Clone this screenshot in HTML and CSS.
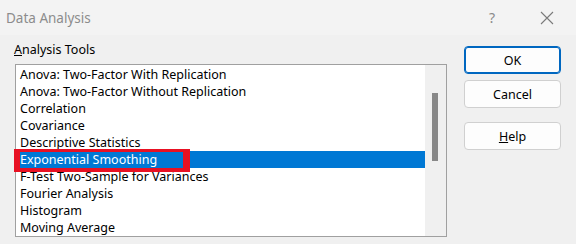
FILE: index.html
```html
<!DOCTYPE html>
<html lang="en">
<head>
  <meta charset="UTF-8">
  <title>Data Analysis</title>
  <link rel="stylesheet" href="styles.css">
</head>
<body>
  <div class="dialog">
    <div class="titlebar">
      <span class="title">Data Analysis</span>
      <span class="help-icon">?</span>
      <svg class="close-icon" width="14" height="14" viewBox="0 0 14 14">
        <path d="M1 1 L13 13 M13 1 L1 13" stroke="#7a7a7a" stroke-width="1.1" fill="none"/>
      </svg>
    </div>

    <div class="content">
      <div class="tools">
        <div class="label"><u>A</u>nalysis Tools</div>
        <div class="listbox">
          <ul class="items">
            <li>Anova: Two-Factor With Replication</li>
            <li>Anova: Two-Factor Without Replication</li>
            <li>Correlation</li>
            <li>Covariance</li>
            <li>Descriptive Statistics</li>
            <li class="selected"><span class="marker">Exponential Smoothing</span></li>
            <li>F-Test Two-Sample for Variances</li>
            <li>Fourier Analysis</li>
            <li>Histogram</li>
            <li>Moving Average</li>
          </ul>
          <div class="scrollbar">
            <div class="thumb"></div>
          </div>
        </div>
      </div>

      <div class="buttons">
        <button class="btn default">OK</button>
        <button class="btn">Cancel</button>
        <button class="btn help"><u>H</u>elp</button>
      </div>
    </div>
  </div>
</body>
</html>
```

FILE: styles.css
```css
body {
  margin: 0;
  padding: 0;
  font-family: "Noto Sans", "Open Sans", sans-serif;
  font-size: 12.5px;
  color: #000;
}

.dialog {
  width: 576px;
  height: 244px;
  background: #f0f0f0;
  overflow: hidden;
}

.titlebar {
  height: 35px;
  display: flex;
  align-items: center;
  background: #f3f3f3;
  padding-left: 6px;
}

.title {
  color: #8c8c8c;
  font-size: 13.5px;
  flex: 1;
}

.help-icon {
  color: #8a8a8a;
  font-size: 14px;
  margin-right: 45px;
}

.close-icon {
  margin-right: 22px;
}

.content {
  display: flex;
  padding-left: 15px;
}

.tools {
  width: 432px;
}

.label {
  height: 29px;
  line-height: 28px;
  padding-top: 1px;
  box-sizing: border-box;
  margin-left: -1px;
}

.listbox {
  display: flex;
  height: 173px;
  box-sizing: border-box;
  border: 1px solid #a0a0a0;
  background: #fff;
}

.items {
  list-style: none;
  margin: 0;
  padding: 1px 0 0;
  flex: 1;
}

.items li {
  height: 17px;
  line-height: 17px;
  padding-left: 4px;
  white-space: nowrap;
}

.items li.selected {
  background: #0078d4;
  color: #fff;
}

.marker {
  position: relative;
  display: inline-block;
  width: 162px;
}

.marker::after {
  content: "";
  position: absolute;
  left: -6px;
  right: -8px;
  top: -2px;
  bottom: -4px;
  border: solid #e81123;
  border-width: 3px 7px 4px 6px;
}

.scrollbar {
  width: 21px;
  background: #f0f0f0;
  position: relative;
}

.thumb {
  position: absolute;
  left: 7px;
  top: 28px;
  width: 6px;
  height: 68px;
  background: #888;
}

.buttons {
  display: flex;
  flex-direction: column;
  margin-left: 17px;
  padding-top: 11px;
}

.btn {
  width: 97px;
  height: 28px;
  font-family: inherit;
  font-size: 12.5px;
  background: #fdfdfd;
  border: 1px solid #d0d0d0;
  border-radius: 4px;
  margin-bottom: 6px;
  padding: 0;
  color: #000;
}

.btn.default {
  border: 1px solid #0067c0;
  box-shadow: inset 0 0 0 1px #0067c0;
}

.btn.help {
  margin-top: 8px;
}
```
